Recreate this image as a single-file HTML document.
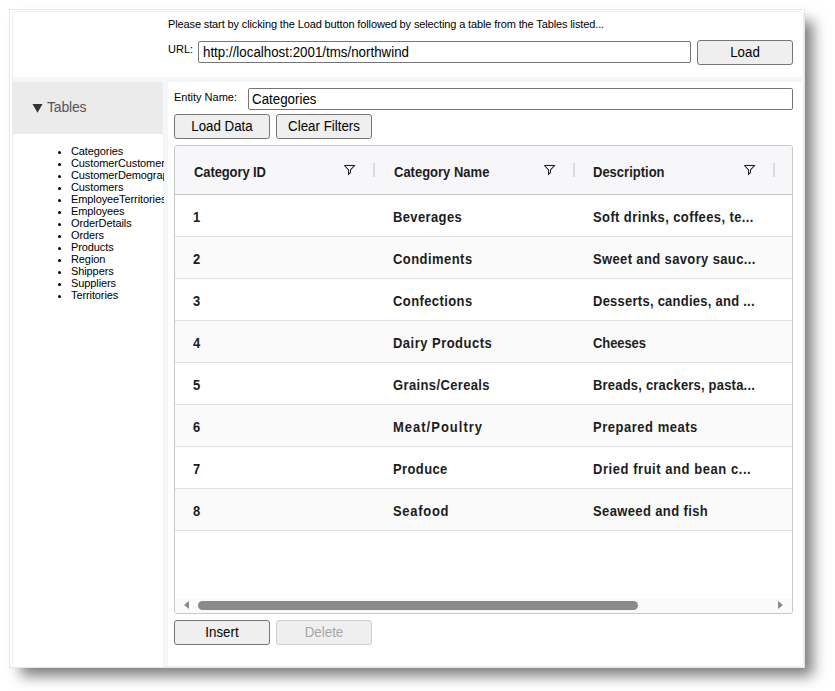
<!DOCTYPE html>
<html><head><meta charset="utf-8">
<style>
*{box-sizing:border-box;margin:0;padding:0}
html,body{width:835px;height:691px;overflow:hidden;background:#fff;font-family:"Liberation Sans",sans-serif;color:#000}
.abs{position:absolute}
#win{position:absolute;left:9px;top:9px;width:796px;height:659px;background:#fff;border:1px solid #e6e6e6;box-shadow:10px 10px 13px -2px rgba(0,0,0,0.51)}
#inner{position:absolute;left:12px;top:11px;width:792px;height:656px;border:1px solid #ececec;border-radius:5px;background:#fff}
.txt{position:absolute;white-space:nowrap}
.input{position:absolute;border:1px solid #767676;border-radius:2px;background:#fff;font-size:13.33px;padding-left:4px;line-height:20px;white-space:nowrap;overflow:hidden}
.btn{position:absolute;border:1px solid #767676;border-radius:3px;background:#efefef;font-size:13.33px;text-align:center;color:#000}
.btn.dis{border-color:#cfcfcf;color:#a6a6a6;background:#efefef}
.t{display:inline-block;transform:scaleY(1.1);transform-origin:50% 15px}
.input .t{position:relative;top:1px;transform-origin:50% 14.6px}
#bluebar{position:absolute;left:13px;top:77px;width:791px;height:5px;background:#f1f7fb}
#left{position:absolute;left:13px;top:82px;width:150px;height:585px;background:#fff;overflow:hidden}
#lefthdr{position:absolute;left:0;top:0;width:150px;height:52px;background:#ebebeb}
#vbar{position:absolute;left:163px;top:82px;width:5px;height:584px;background:#f1f7fb}
#list{position:absolute;left:58px;top:145px;font-size:11px;line-height:12px;width:106px;overflow:hidden;letter-spacing:-0.1px}
#list div{position:relative;padding-left:13px;white-space:nowrap}
#list div:before{content:"";position:absolute;left:0;top:6px;width:3px;height:3px;background:#000;border-radius:50%}
#grid{position:absolute;left:174px;top:145px;width:619px;height:469px;border:1px solid #c8c8c8;border-radius:3px;overflow:hidden;background:#fff}
.hdr{position:absolute;left:0;top:0;width:617px;height:49px;background:#f7f7f9;border-bottom:1px solid #c4c4c8}
.row{position:absolute;left:0;width:617px;height:42px;border-bottom:1px solid #e0e0e3}
.cell{position:absolute;font-weight:bold;font-size:13px;color:#1d1d1d;white-space:nowrap;transform:scaleY(1.1);transform-origin:0 2.5px}
.sep{position:absolute;top:17px;width:2px;height:14px;background:#dcdcdc}
</style></head>
<body>
<div id="win"></div>
<div id="inner"></div>

<div class="txt" style="left:168px;top:18px;font-size:11px;letter-spacing:-0.125px">Please start by clicking the Load button followed by selecting a table from the Tables listed...</div>
<div class="txt" style="left:168px;top:43px;font-size:11px;">URL:</div>
<div class="input" style="left:198px;top:41px;width:493px;height:22px;"><span class="t">http://localhost:2001/tms/northwind</span></div>
<div class="btn" style="left:697px;top:40px;width:96px;height:25px;line-height:23px;"><span class="t">Load</span></div>

<div id="bluebar"></div>
<div id="left"><div id="lefthdr"></div></div>
<div id="vbar"></div>
<svg class="abs" style="left:30px;top:100px" width="16" height="16" viewBox="30 100 16 16"><path d="M32.5 104H42.5L37.5 112.8Z" fill="#333"/></svg>
<div class="txt" style="left:47px;top:99px;font-size:14px;letter-spacing:-0.2px;color:#555">Tables</div>
<div id="list">
<div>Categories</div><div>CustomerCustomerDemo</div><div>CustomerDemographics</div><div>Customers</div><div>EmployeeTerritories</div><div>Employees</div><div>OrderDetails</div><div>Orders</div><div>Products</div><div>Region</div><div>Shippers</div><div>Suppliers</div><div>Territories</div>
</div>

<div class="txt" style="left:174px;top:91px;font-size:11px;">Entity Name:</div>
<div class="input" style="left:248px;top:88px;width:545px;height:22px;padding-left:3px"><span class="t">Categories</span></div>
<div class="btn" style="left:174px;top:114px;width:96px;height:25px;line-height:23px;"><span class="t">Load Data</span></div>
<div class="btn" style="left:276px;top:114px;width:96px;height:25px;line-height:23px;"><span class="t">Clear Filters</span></div>

<div id="grid">
  <div class="hdr">
    <div class="cell" style="left:19px;top:18px;letter-spacing:-0.1px">Category ID</div>
    <div class="cell" style="left:219px;top:18px;">Category Name</div>
    <div class="cell" style="left:218px;top:18px;display:none"></div>
    <div class="cell" style="left:418px;top:18px;">Description</div>
    <div class="sep" style="left:198px"></div>
    <div class="sep" style="left:398px"></div>
    <div class="sep" style="left:598px"></div>
  </div>
  <div class="row" style="top:49px;background:#fff"><div class="cell" style="left:18px;top:14px;">1</div><div class="cell" style="left:218px;top:14px;letter-spacing:0.375px">Beverages</div><div class="cell" style="left:418px;top:14px;letter-spacing:0.392px">Soft drinks, coffees, te...</div></div>
  <div class="row" style="top:91px;background:#fafafa"><div class="cell" style="left:18px;top:14px;">2</div><div class="cell" style="left:218px;top:14px;letter-spacing:0.444px">Condiments</div><div class="cell" style="left:418px;top:14px;letter-spacing:0.365px">Sweet and savory sauc...</div></div>
  <div class="row" style="top:133px;background:#fff"><div class="cell" style="left:18px;top:14px;">3</div><div class="cell" style="left:218px;top:14px;letter-spacing:0.4px">Confections</div><div class="cell" style="left:418px;top:14px;letter-spacing:0.248px">Desserts, candies, and ...</div></div>
  <div class="row" style="top:175px;background:#fafafa"><div class="cell" style="left:18px;top:14px;">4</div><div class="cell" style="left:218px;top:14px;letter-spacing:0.477px">Dairy Products</div><div class="cell" style="left:418px;top:14px;letter-spacing:-0.1px">Cheeses</div></div>
  <div class="row" style="top:217px;background:#fff"><div class="cell" style="left:18px;top:14px;">5</div><div class="cell" style="left:218px;top:14px;letter-spacing:0.369px">Grains/Cereals</div><div class="cell" style="left:418px;top:14px;letter-spacing:0.2px">Breads, crackers, pasta...</div></div>
  <div class="row" style="top:259px;background:#fafafa"><div class="cell" style="left:18px;top:14px;">6</div><div class="cell" style="left:218px;top:14px;letter-spacing:1.0px">Meat/Poultry</div><div class="cell" style="left:418px;top:14px;letter-spacing:0.523px">Prepared meats</div></div>
  <div class="row" style="top:301px;background:#fff"><div class="cell" style="left:18px;top:14px;">7</div><div class="cell" style="left:218px;top:14px;letter-spacing:0.383px">Produce</div><div class="cell" style="left:418px;top:14px;letter-spacing:0.55px">Dried fruit and bean c...</div></div>
  <div class="row" style="top:343px;background:#fafafa"><div class="cell" style="left:18px;top:14px;">8</div><div class="cell" style="left:218px;top:14px;letter-spacing:0.7px">Seafood</div><div class="cell" style="left:418px;top:14px;letter-spacing:0.373px">Seaweed and fish</div></div>
  <div class="abs" style="left:0;top:453px;width:617px;height:14px;background:#fafafa"></div>
  <div class="abs" style="left:9px;top:455px;width:0;height:0;border-top:4.5px solid transparent;border-bottom:4.5px solid transparent;border-right:5px solid #8a8a8a"></div>
  <div class="abs" style="left:23px;top:455px;width:440px;height:9px;border-radius:4.5px;background:#8a8a8a"></div>
  <div class="abs" style="left:603px;top:455px;width:0;height:0;border-top:4.5px solid transparent;border-bottom:4.5px solid transparent;border-left:5px solid #8a8a8a"></div>
</div>
<svg class="abs" style="left:344px;top:164px" width="12" height="12" viewBox="0 0 12 12"><path d="M0.6 1.5H10.5L6.5 6V8.4L4.5 10.3V6Z" fill="none" stroke="#1a1a2a" stroke-width="1.05" stroke-linejoin="miter"/></svg>
<svg class="abs" style="left:544px;top:164px" width="12" height="12" viewBox="0 0 12 12"><path d="M0.6 1.5H10.5L6.5 6V8.4L4.5 10.3V6Z" fill="none" stroke="#1a1a2a" stroke-width="1.05" stroke-linejoin="miter"/></svg>
<svg class="abs" style="left:744px;top:164px" width="12" height="12" viewBox="0 0 12 12"><path d="M0.6 1.5H10.5L6.5 6V8.4L4.5 10.3V6Z" fill="none" stroke="#1a1a2a" stroke-width="1.05" stroke-linejoin="miter"/></svg>

<div class="btn" style="left:174px;top:620px;width:96px;height:25px;line-height:23px;"><span class="t">Insert</span></div>
<div class="btn dis" style="left:276px;top:620px;width:96px;height:25px;line-height:23px;"><span class="t">Delete</span></div>
</body></html>
